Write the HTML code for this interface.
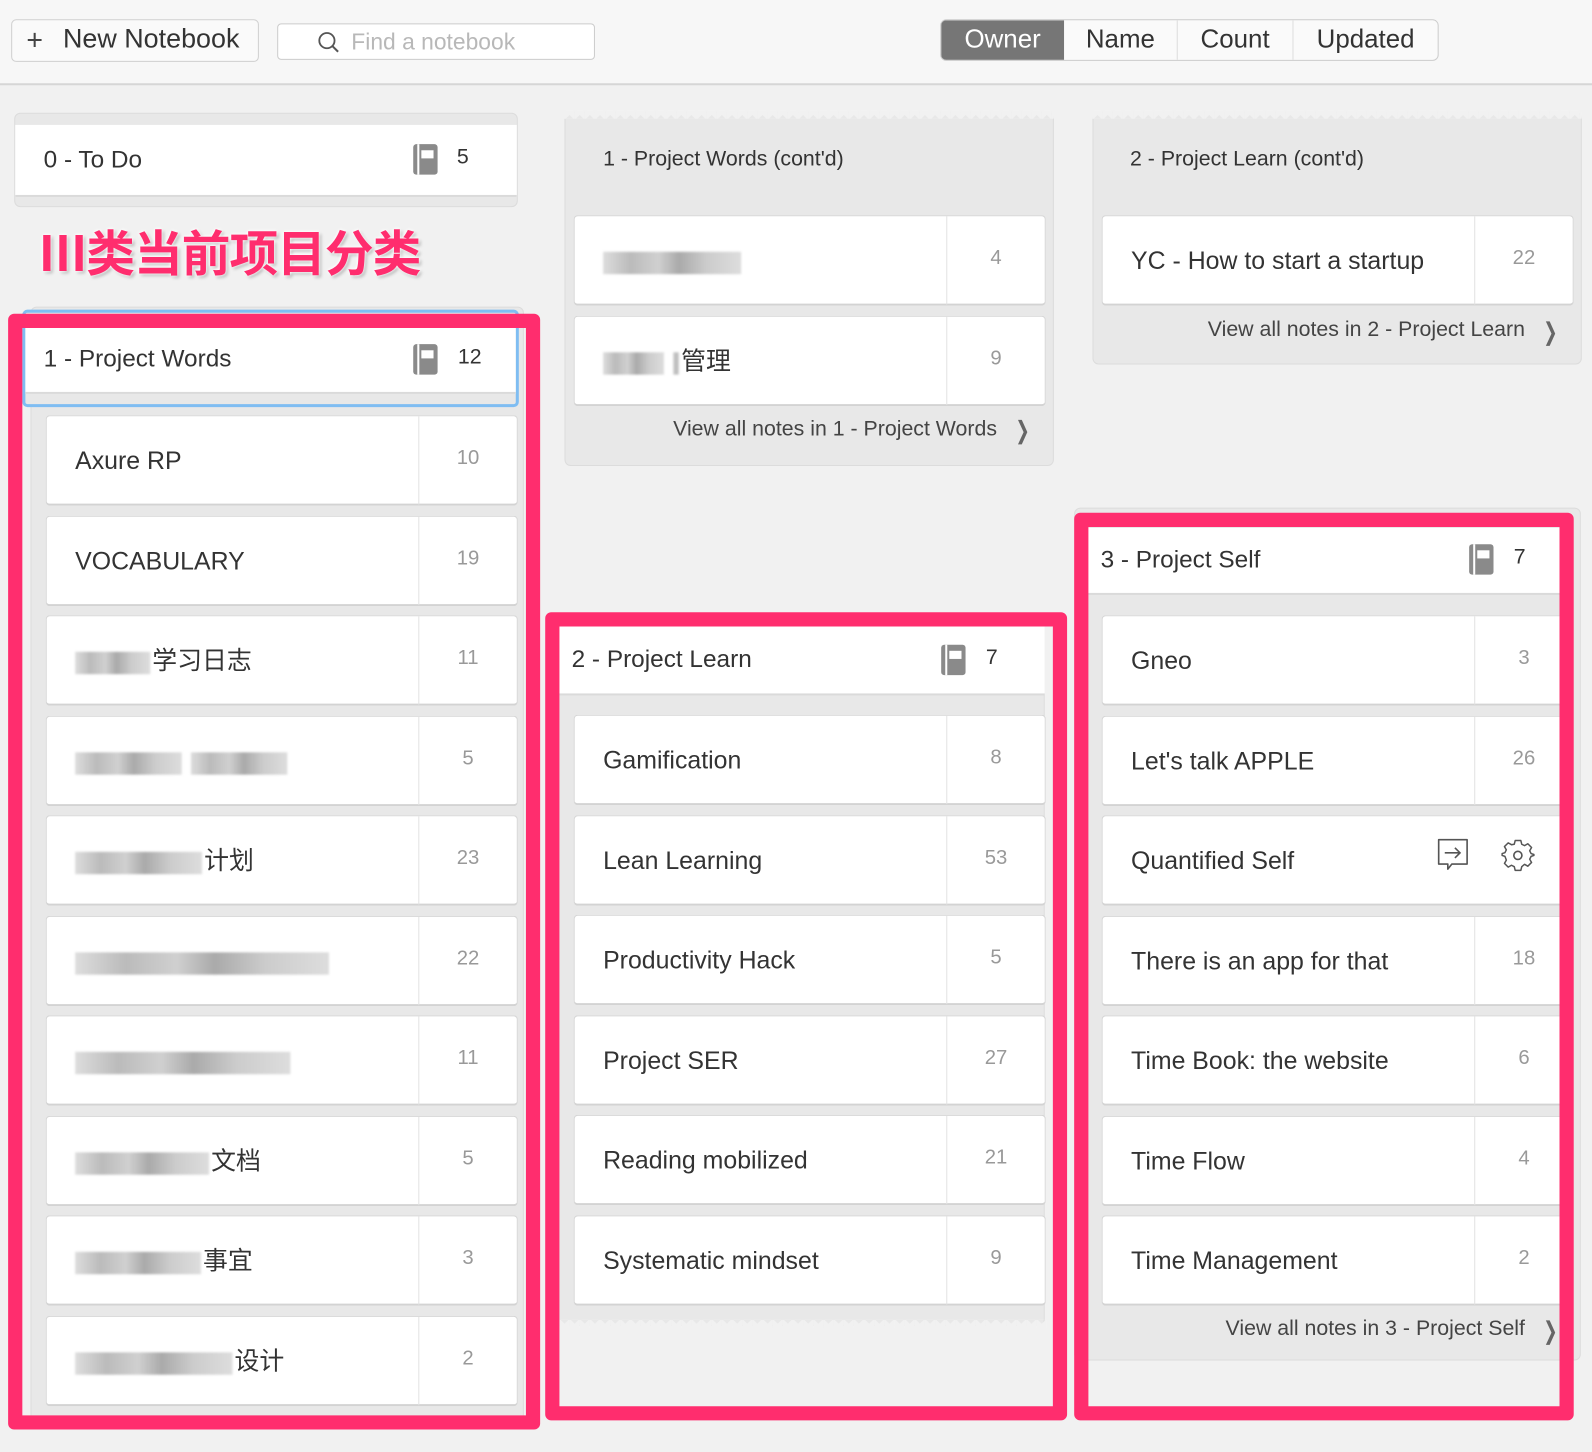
<!DOCTYPE html>
<html><head><meta charset="utf-8"><style>
*{box-sizing:border-box;margin:0;padding:0}
body{width:1592px;height:1430px;background:#f1f1f1;font-family:"Liberation Sans","Noto Sans CJK SC",sans-serif;color:#333;position:relative;overflow:hidden}
#w{position:absolute;left:0;top:0;width:1592px;height:1430px;transform:scale(1.0153);transform-origin:0 0}
.a{position:absolute}
.top{left:0;top:0;width:1592px;height:84px;background:#f7f7f7;border-bottom:2px solid #d6d6d6}
.btn{background:#fafafa;border:1px solid #d0d0d0;border-radius:5px}
.panel{background:#e8e8e8;border:1px solid #dcdcdc;border-radius:6px}
.hdr{background:#fff;border-bottom:2px solid #dadada;font-size:24px;display:flex;align-items:center;padding-left:28px}
.it{background:#fff;border:1px solid #d6d6d6;border-bottom:2px solid #d3d3d3;border-radius:4px;height:89px;width:465px}
.it .t{position:absolute;left:28px;top:0;height:89px;line-height:89px;font-size:24.5px;color:#333;white-space:nowrap}
.it .c{position:absolute;right:0;top:0;width:97px;height:87px;border-left:1px solid #e2e2e2;text-align:center;font-size:20px;color:#999;padding-top:30px}
.bl{display:inline-block;height:22px;vertical-align:middle;background:linear-gradient(90deg,#ddd,#bbb 20%,#d0d0d0 40%,#aaa 55%,#ccc 75%,#ddd);filter:blur(1px);margin-right:2px}
.va{font-size:21px;color:#444;text-align:right}
.pink{border:14px solid #ff2d6e;border-radius:6px}
.bk{width:24px;height:30px;background:#8a8a8a;border-radius:3px;position:absolute}
.bk:before{content:"";position:absolute;left:8px;top:6px;width:12px;height:8px;background:#fff}
.bk:after{content:"";position:absolute;left:4px;top:0;width:2px;height:30px;background:#fff}
.zz{height:8px;background:linear-gradient(135deg,#f1f1f1 50%,transparent 50%) 0 0/10px 8px,linear-gradient(225deg,#f1f1f1 50%,transparent 50%) 0 0/10px 8px}
</style></head><body><div id="w">
<div class="a top"></div>
<div class="a btn" style="left:11px;top:19px;width:244px;height:42px"></div>
<div class="a" style="left:26px;top:23px;font-size:28px;color:#444;line-height:34px">+</div>
<div class="a" style="left:62px;top:23px;font-size:26.5px;color:#333">New Notebook</div>
<div class="a" style="left:273px;top:23px;width:313px;height:36px;background:#fff;border:1px solid #ccc;border-radius:4px"></div>
<svg class="a" style="left:312px;top:30px" width="24" height="24"><circle cx="10" cy="10" r="7.5" fill="none" stroke="#555" stroke-width="1.8"/><line x1="15.5" y1="15.5" x2="21" y2="21" stroke="#555" stroke-width="2"/></svg>
<div class="a" style="left:346px;top:29px;font-size:22.5px;color:#b8b8b8">Find a notebook</div>
<div class="a" style="left:926px;top:19px;width:491px;height:41px;background:#fafafa;border:1px solid #ccc;border-radius:6px;overflow:hidden;display:flex;font-size:25.5px">
<div style="width:121px;background:#767676;color:#fff;text-align:center;line-height:39px">Owner</div>
<div style="width:112px;border-right:1px solid #ddd;text-align:center;line-height:39px">Name</div>
<div style="width:114px;border-right:1px solid #ddd;text-align:center;line-height:39px">Count</div>
<div style="flex:1;text-align:center;line-height:39px">Updated</div></div>

<div class="a panel" style="left:14px;top:111px;width:496px;height:93px"></div>
<div class="a hdr" style="left:15px;top:123px;width:494px;height:71px">0 - To Do</div>
<div class="a bk" style="left:407px;top:142px"></div><div class="a" style="left:450px;top:143px;font-size:21px">5</div>
<div class="a" style="left:38px;top:211px;font-size:48px;font-weight:bold;color:#ff2d6e;text-shadow:0 0 3px #fff,0 0 3px #fff,2px 2px 3px rgba(0,0,0,.3);letter-spacing:-1px">Ⅲ类当前项目分类</div>

<div class="a panel" style="left:30px;top:302px;width:486px;height:1100px"></div>
<div class="a" style="left:22px;top:305px;width:489px;height:96px;border:3px solid #7fbdf2;border-radius:5px;background:#e8e8e8"></div>
<div class="a hdr" style="left:25px;top:322px;width:483px;height:66px;padding-left:18px">1 - Project Words</div>
<div class="a bk" style="left:407px;top:339px"></div><div class="a" style="left:451px;top:340px;font-size:21px">12</div>

<div class="a it" style="left:45px;top:409px"><div class="t">Axure RP</div><div class="c">10</div></div>
<div class="a it" style="left:45px;top:508px"><div class="t">VOCABULARY</div><div class="c">19</div></div>
<div class="a it" style="left:45px;top:606px"><div class="t"><span class="bl" style="width:74px"></span>学习日志</div><div class="c">11</div></div>
<div class="a it" style="left:45px;top:705px"><div class="t"><span class="bl" style="width:105px"></span> <span class="bl" style="width:95px"></span></div><div class="c">5</div></div>
<div class="a it" style="left:45px;top:803px"><div class="t"><span class="bl" style="width:125px"></span>计划</div><div class="c">23</div></div>
<div class="a it" style="left:45px;top:902px"><div class="t"><span class="bl" style="width:250px"></span></div><div class="c">22</div></div>
<div class="a it" style="left:45px;top:1000px"><div class="t"><span class="bl" style="width:212px"></span></div><div class="c">11</div></div>
<div class="a it" style="left:45px;top:1099px"><div class="t"><span class="bl" style="width:132px"></span>文档</div><div class="c">5</div></div>
<div class="a it" style="left:45px;top:1197px"><div class="t"><span class="bl" style="width:124px"></span>事宜</div><div class="c">3</div></div>
<div class="a it" style="left:45px;top:1296px"><div class="t"><span class="bl" style="width:155px"></span>设计</div><div class="c">2</div></div>

<div class="a panel" style="left:556px;top:110px;width:482px;height:349px"></div>
<div class="a zz" style="left:556px;top:109px;width:482px"></div>
<div class="a" style="left:594px;top:145px;font-size:21px">1 - Project Words (cont'd)</div>
<div class="a it" style="left:565px;top:212px"><div class="t"><span class="bl" style="width:136px"></span></div><div class="c">4</div></div>
<div class="a it" style="left:565px;top:311px"><div class="t"><span class="bl" style="width:60px"></span> <span class="bl" style="width:6px"></span>管理</div><div class="c">9</div></div>
<div class="a va" style="left:560px;top:411px;width:422px">View all notes in 1 - Project Words</div>
<div class="a" style="left:997px;top:410px;font-size:24px;color:#666;transform:scaleX(.7)">❯</div>

<div class="a panel" style="left:543px;top:606px;width:486px;height:700px"></div>
<div class="a hdr" style="left:551px;top:617px;width:478px;height:68px;padding-left:12px">2 - Project Learn</div>
<div class="a bk" style="left:927px;top:635px"></div><div class="a" style="left:971px;top:636px;font-size:21px">7</div>
<div class="a it" style="left:565px;top:704px"><div class="t">Gamification</div><div class="c">8</div></div>
<div class="a it" style="left:565px;top:803px"><div class="t">Lean Learning</div><div class="c">53</div></div>
<div class="a it" style="left:565px;top:901px"><div class="t">Productivity Hack</div><div class="c">5</div></div>
<div class="a it" style="left:565px;top:1000px"><div class="t">Project SER</div><div class="c">27</div></div>
<div class="a it" style="left:565px;top:1098px"><div class="t">Reading mobilized</div><div class="c">21</div></div>
<div class="a it" style="left:565px;top:1197px"><div class="t">Systematic mindset</div><div class="c">9</div></div>
<div class="a zz" style="left:551px;top:1300px;width:486px;transform:scaleY(-1)"></div>

<div class="a panel" style="left:1076px;top:110px;width:482px;height:249px"></div>
<div class="a zz" style="left:1076px;top:109px;width:482px"></div>
<div class="a" style="left:1113px;top:145px;font-size:21px">2 - Project Learn (cont'd)</div>
<div class="a it" style="left:1085px;top:212px"><div class="t">YC - How to start a startup</div><div class="c">22</div></div>
<div class="a va" style="left:1080px;top:313px;width:422px">View all notes in 2 - Project Learn</div>
<div class="a" style="left:1517px;top:313px;font-size:24px;color:#666;transform:scaleX(.7)">❯</div>

<div class="a panel" style="left:1058px;top:500px;width:499px;height:840px"></div>
<div class="a hdr" style="left:1060px;top:520px;width:476px;height:66px;padding-left:24px">3 - Project Self</div>
<div class="a bk" style="left:1447px;top:536px"></div><div class="a" style="left:1491px;top:537px;font-size:21px">7</div>
<div class="a it" style="left:1085px;top:606px"><div class="t">Gneo</div><div class="c">3</div></div>
<div class="a it" style="left:1085px;top:705px"><div class="t">Let's talk APPLE</div><div class="c">26</div></div>
<div class="a it" style="left:1085px;top:803px"><div class="t">Quantified Self</div></div>
<svg class="a" style="left:1414px;top:824px" width="36" height="38"><path d="M3 3h28v24H16l-4 5v-5H3z" fill="none" stroke="#555" stroke-width="1.6" stroke-linejoin="round"/><path d="M9 16h15m-5-5l5 5-5 5" fill="none" stroke="#555" stroke-width="1.6"/></svg>
<svg class="a" style="left:1478px;top:826px" width="34" height="34" viewBox="0 0 34 34"><path d="M14 2h6l1 4 3 1.5 3.5-2 4 4-2 3.5L31 16l3 1v0l0 1-3 1-1.5 3 2 3.5-4 4-3.5-2L21 30l-1 4h-6l-1-4-3-1.5-3.5 2-4-4 2-3.5L3 19l-3-1v-2l3-1 1.5-3-2-3.5 4-4 3.5 2L13 6z" transform="translate(1.5 0) scale(.92)" fill="none" stroke="#555" stroke-width="1.6" stroke-linejoin="round"/><circle cx="17" cy="16.5" r="4" fill="none" stroke="#555" stroke-width="1.6"/></svg>
<div class="a it" style="left:1085px;top:902px"><div class="t">There is an app for that</div><div class="c">18</div></div>
<div class="a it" style="left:1085px;top:1000px"><div class="t">Time Book: the website</div><div class="c">6</div></div>
<div class="a it" style="left:1085px;top:1099px"><div class="t">Time Flow</div><div class="c">4</div></div>
<div class="a it" style="left:1085px;top:1197px"><div class="t">Time Management</div><div class="c">2</div></div>
<div class="a va" style="left:1080px;top:1297px;width:422px">View all notes in 3 - Project Self</div>
<div class="a" style="left:1517px;top:1297px;font-size:24px;color:#666;transform:scaleX(.7)">❯</div>

<div class="a pink" style="left:8px;top:309px;width:524px;height:1099px"></div>
<div class="a pink" style="left:537px;top:603px;width:514px;height:796px"></div>
<div class="a pink" style="left:1058px;top:505px;width:492px;height:894px"></div>
</div></body></html>
